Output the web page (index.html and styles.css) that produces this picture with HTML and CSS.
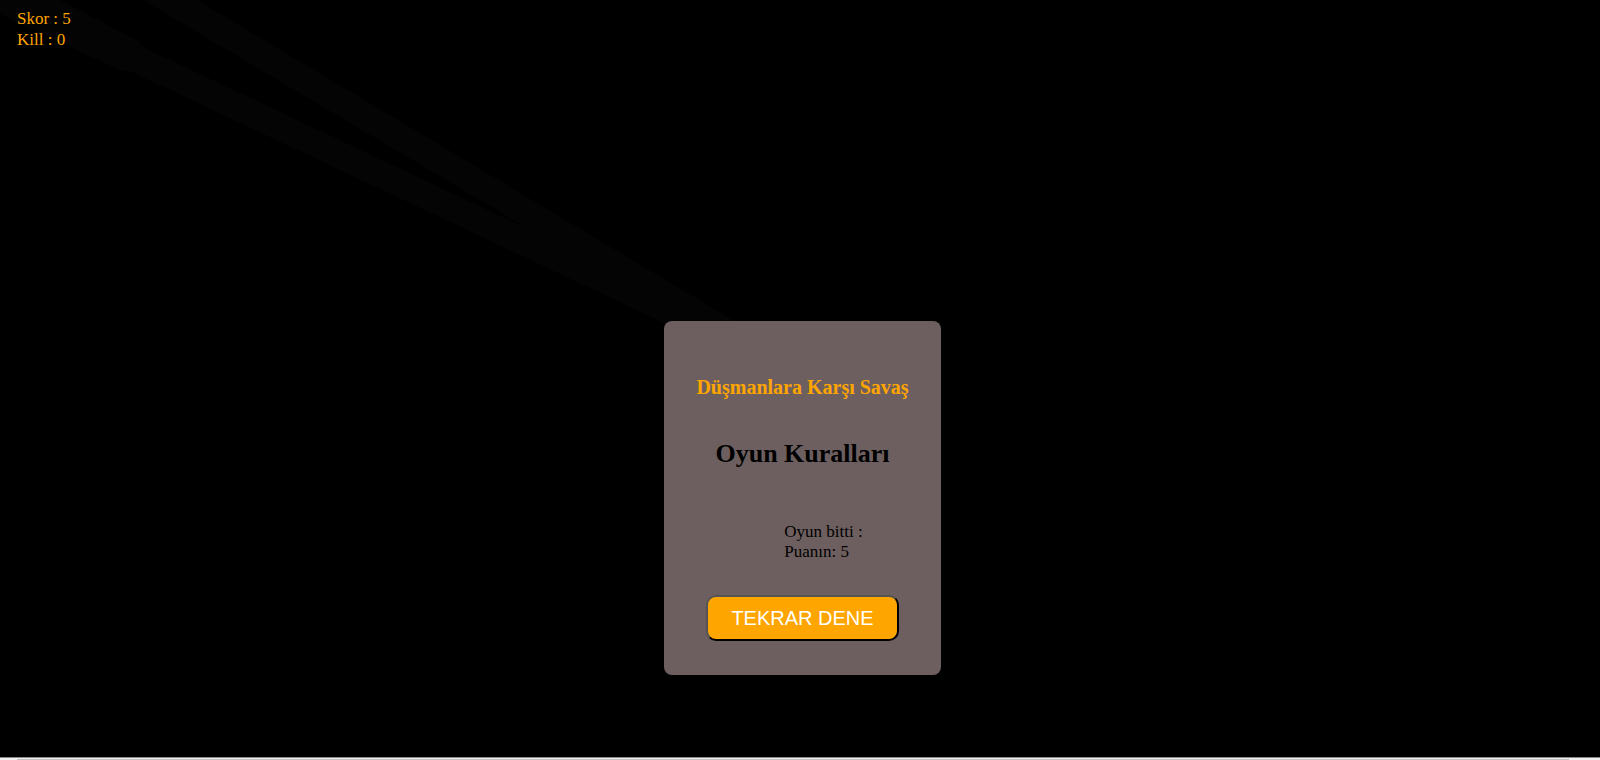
FILE: index.html
```
<!DOCTYPE html>
<html lang="tr">
<head>
<meta charset="utf-8">
<title>Düşmanlara Karşı Savaş</title>
<link rel="stylesheet" href="styles.css">
</head>
<body>
<main class="stage">
  <svg class="trails" viewBox="0 0 760 340" width="760" height="340" aria-hidden="true">
    <path d="M143 0H197L738 323H664L130 71H121L0 14V0H60L137 40L145 48L530 230Z"/>
  </svg>
  <div class="hud">
    <div>Skor : <span>5</span></div>
    <div>Kill : <span>0</span></div>
  </div>
  <section class="card">
    <h1 class="title">Düşmanlara Karşı Savaş</h1>
    <h2 class="heading">Oyun Kuralları</h2>
    <div class="result">Oyun bitti :<br>Puanın: 5</div>
    <button class="retry" type="button">TEKRAR DENE</button>
  </section>
</main>
<div class="scrollbar"><div class="thumb"></div></div>
</body>
</html>
```
FILE: styles.css
```
* {
  box-sizing: border-box;
}

body {
  margin: 0;
  min-height: 100vh;
  display: flex;
  flex-direction: column;
  overflow: hidden;
  background: #000;
  font-family: "Liberation Serif", "Times New Roman", serif;
  font-size: 17px;
  line-height: 20px;
}

.stage {
  position: relative;
  flex: 1;
  display: flex;
  justify-content: center;
  align-items: flex-end;
  padding: 0 0 82px 5px;
}

.trails {
  position: absolute;
  top: 0;
  left: 0;
  fill: #040404;
}

.hud {
  position: absolute;
  top: 8px;
  left: 17px;
  color: orange;
  line-height: 21px;
}

.card {
  position: relative;
  display: flex;
  flex-direction: column;
  align-items: center;
  padding: 54px 32px 34px;
  border-radius: 8px;
  background: #6d5f5f;
}

.title {
  margin: 0 0 40px;
  color: orange;
  font-size: 20px;
  line-height: 24px;
}

.heading {
  margin: 0 0 53px;
  font-size: 26px;
  line-height: 30px;
}

.result {
  margin: 0 0 33px 42px;
}

.retry {
  padding: 10px 23px;
  border: 2px outset #000;
  border-radius: 10px;
  background: orange;
  color: #fff;
  font-family: "Liberation Sans", Arial, sans-serif;
  font-size: 20px;
  line-height: 22px;
}

.scrollbar {
  height: 3px;
  padding: 1px 31px 0 17px;
  border-top: 1px solid #888;
  background: #f1f1f1;
}

.thumb {
  height: 1px;
  background: #c1c1c1;
}
```
